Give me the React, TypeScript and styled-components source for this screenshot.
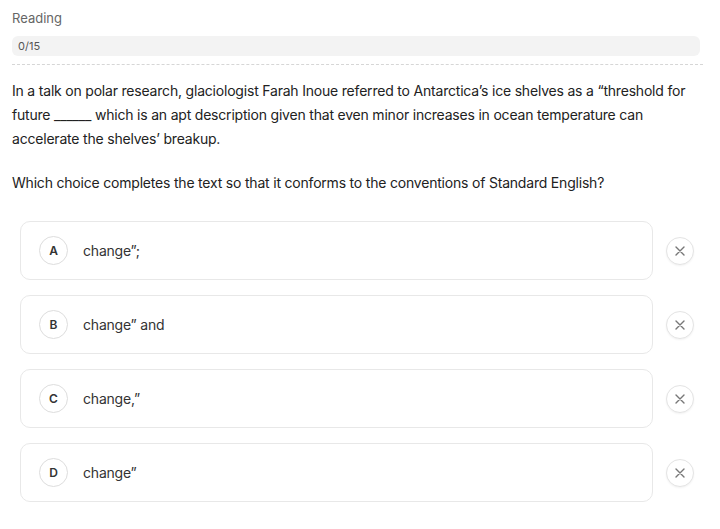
import React from 'react';
import styled, { createGlobalStyle } from 'styled-components';

const GlobalStyle = createGlobalStyle`
  html, body {
    margin: 0;
    padding: 0;
    background: #ffffff;
  }
  body {
    font-family: Inter, 'Noto Sans', 'Liberation Sans', sans-serif;
    color: #222222;
    -webkit-font-smoothing: antialiased;
  }
`;

const Wrapper = styled.main`
  padding: 8px 17px 0 12px;
`;

const SectionTitle = styled.div`
  font-size: 13px;
  line-height: 20px;
  color: #666666;
`;

const ProgressBar = styled.div`
  margin-top: 8px;
  height: 20px;
  width: 688px;
  border-radius: 6px;
  background-color: #f3f3f3;
  display: flex;
  align-items: center;
  padding: 0 6px;
  box-sizing: border-box;
  font-size: 11px;
  color: #555555;
`;

const Divider = styled.hr`
  margin: 8px 0 0;
  border: none;
  border-top: 1px dashed #d6d6d6;
`;

const Passage = styled.p`
  margin: 14px 0 0;
  font-size: 14px;
  line-height: 24px;
  letter-spacing: -0.2px;
  color: #222222;
`;

const Question = styled(Passage)`
  margin-top: 20px;
`;

const OptionList = styled.div`
  margin-top: 26px;
  padding: 0 9px 0 8px;
  display: flex;
  flex-direction: column;
  gap: 15px;
`;

const OptionRow = styled.div`
  display: flex;
  align-items: center;
  gap: 13px;
`;

const OptionCard = styled.button`
  flex: 1;
  height: 59px;
  display: flex;
  align-items: center;
  gap: 15px;
  padding: 0 0 0 18px;
  border: 1px solid #e8e8e8;
  border-radius: 10px;
  background: #ffffff;
  font-family: inherit;
  font-size: 14px;
  letter-spacing: -0.2px;
  color: #333333;
  text-align: left;
  cursor: pointer;
`;

const LetterBadge = styled.span`
  width: 29px;
  height: 29px;
  box-sizing: border-box;
  border: 1px solid #dddddd;
  border-radius: 50%;
  display: flex;
  align-items: center;
  justify-content: center;
  font-size: 12px;
  font-weight: 600;
  letter-spacing: 0;
  color: #333333;
  flex-shrink: 0;
`;

const EliminateBtn = styled.button`
  width: 28px;
  height: 28px;
  padding: 0;
  box-sizing: border-box;
  border: 1px solid #e4e4e4;
  border-radius: 50%;
  background: #ffffff;
  display: flex;
  align-items: center;
  justify-content: center;
  flex-shrink: 0;
  box-shadow: 0 1px 2px rgba(0, 0, 0, 0.05);
  cursor: pointer;
`;

const CrossIcon = () => (
  <svg width='10' height='10' viewBox='0 0 10 10' fill='none'>
    <path d='M1 1L9 9M9 1L1 9' stroke='#777777' strokeWidth='1.4' strokeLinecap='round' />
  </svg>
);

const options = [
  { letter: 'A', text: 'change\u201d;' },
  { letter: 'B', text: 'change\u201d and' },
  { letter: 'C', text: 'change,\u201d' },
  { letter: 'D', text: 'change\u201d' },
];

export default function App() {
  return (
    <Wrapper>
      <GlobalStyle />
      <SectionTitle>Reading</SectionTitle>
      <ProgressBar>0/15</ProgressBar>
      <Divider />
      <Passage>
        In a talk on polar research, glaciologist Farah Inoue referred to Antarctica’s ice shelves as a
        “threshold for future ______ which is an apt description given that even minor increases in ocean
        temperature can accelerate the shelves’ breakup.
      </Passage>
      <Question>
        Which choice completes the text so that it conforms to the conventions of Standard English?
      </Question>
      <OptionList>
        {options.map((option) => (
          <OptionRow key={option.letter}>
            <OptionCard type='button'>
              <LetterBadge>{option.letter}</LetterBadge>
              {option.text}
            </OptionCard>
            <EliminateBtn type='button' aria-label={`Eliminate ${option.letter}`}>
              <CrossIcon />
            </EliminateBtn>
          </OptionRow>
        ))}
      </OptionList>
    </Wrapper>
  );
}
